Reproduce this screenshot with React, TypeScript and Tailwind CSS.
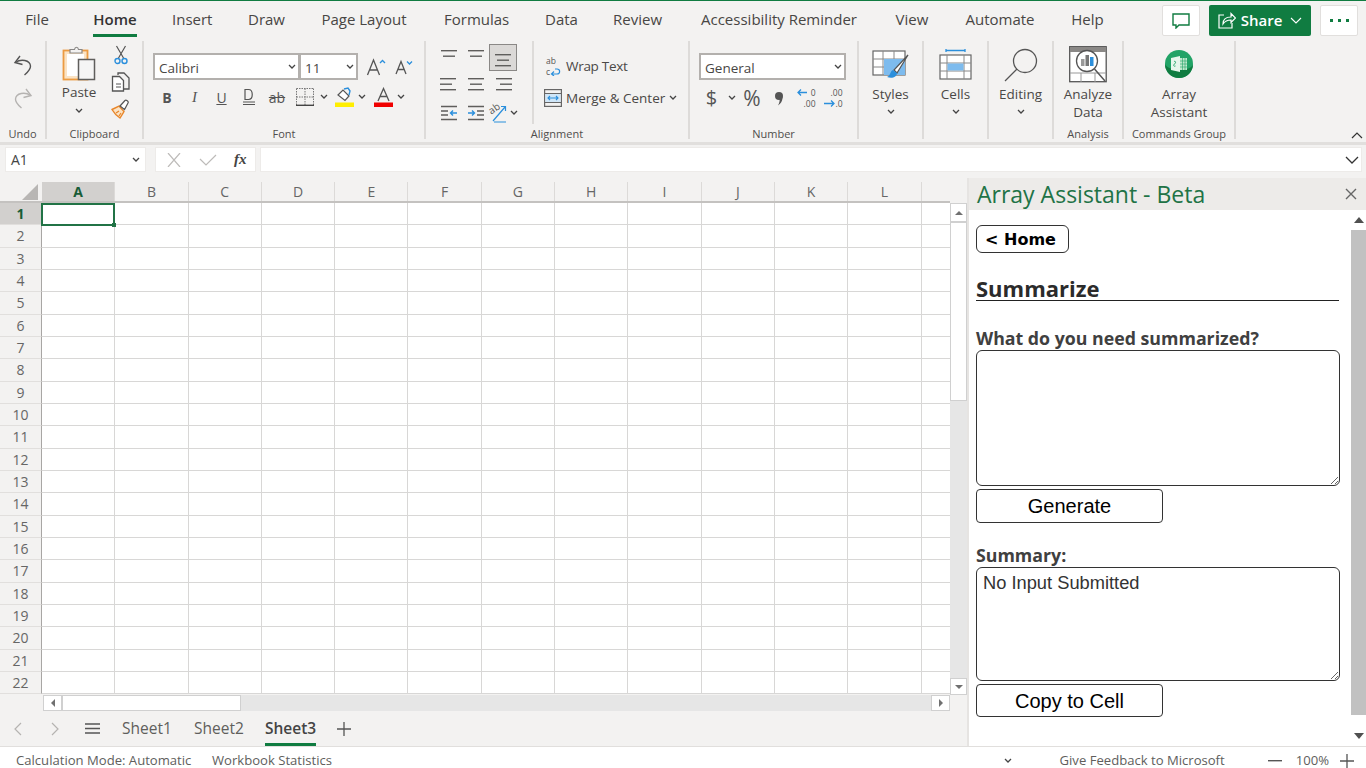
import React from "react";

const ui = "font-['Open_Sans',sans-serif]";
const GREY = "#5f5e5c";
const BLUE = "#2b8fdc";

const tabs = [
  { name: "File", cls: "w-[24px] mr-[44px]" },
  { name: "Home", cls: "w-[44px] mr-[35px]" },
  { name: "Insert", cls: "w-[40px] mr-[36px]" },
  { name: "Draw", cls: "w-[36px] mr-[37px]" },
  { name: "Page Layout", cls: "w-[86px] mr-[37px]" },
  { name: "Formulas", cls: "w-[64px] mr-[37px]" },
  { name: "Data", cls: "w-[32px] mr-[36px]" },
  { name: "Review", cls: "w-[49px] mr-[38px]" },
  { name: "Accessibility Reminder", cls: "w-[158px] mr-[37px]" },
  { name: "View", cls: "w-[34px] mr-[36px]" },
  { name: "Automate", cls: "w-[70px] mr-[36px]" },
  { name: "Help", cls: "w-[33px]" },
];

const columns = ["A", "B", "C", "D", "E", "F", "G", "H", "I", "J", "K", "L"];
const rows = Array.from({ length: 22 }, (_, i) => i + 1);

function Chevron({ size = 8, color = "#444" }: { size?: number; color?: string }) {
  return (
    <svg className="shrink-0" width={size} height={size * 0.7} viewBox="0 0 8 5.6" fill="none">
      <path d="M1 1l3 3 3-3" stroke={color} strokeWidth="1.3" />
    </svg>
  );
}

function Combo({ label, width, border = "" }: { label: string; width: string; border?: string }) {
  return (
    <div className={`${width} ${border} h-[27px] bg-white border-2 border-[#b3b0ad] flex items-center justify-between pl-[4px] pr-[2px] text-[13.5px] text-[#484644]`}>
      <span className="mt-[3px]">{label}</span>
      <Chevron />
    </div>
  );
}

function Group({ width, label, children }: { width: string; label?: string; children: React.ReactNode }) {
  return (
    <div className={`${width} h-[98px] border-r-2 border-[#dddbd9] flex flex-col shrink-0`}>
      <div className="flex-1 min-h-0">{children}</div>
      {label && <div className="h-[12px] leading-[14px] text-[11px] text-center text-[#504e4c] whitespace-nowrap">{label}</div>}
    </div>
  );
}

function BigCommand({ icon, lines }: { icon: React.ReactNode; lines: string[] }) {
  return (
    <div className="flex flex-col items-center text-[13.5px] leading-[18px] text-[#4a4846]">
      <div className="h-[40px] mt-[3px] mb-[1px] flex items-center justify-center">{icon}</div>
      {lines.map((l) => (
        <div key={l} className="whitespace-nowrap">{l}</div>
      ))}
    </div>
  );
}

function DropCommand({ icon, label }: { icon: React.ReactNode; label: string }) {
  return (
    <div className="flex flex-col items-center text-[13.5px] leading-[18px] text-[#4a4846]">
      <div className="h-[40px] mt-[4px] flex items-center justify-center">{icon}</div>
      <div>{label}</div>
      <div className="mt-[6px]"><Chevron /></div>
    </div>
  );
}

function AlignIcon({ lines }: { lines: [number, number][] }) {
  return (
    <svg width="20" height="16" viewBox="0 0 20 16">
      {lines.map(([x, w], i) => (
        <rect key={i} x={x} y={1 + i * 5.5} width={w} height="1.4" fill={GREY} />
      ))}
    </svg>
  );
}

function IndentIcon({ right }: { right?: boolean }) {
  return (
    <svg width="18" height="16" viewBox="0 0 18 16">
      <path d="M1 1.5h16M1 14.5h16" stroke={GREY} strokeWidth="1.3" />
      {right ? (
        <>
          <path d="M10 6h7M10 10h7" stroke={GREY} strokeWidth="1.3" />
          <path d="M1 8h6M5 5.5L7.5 8 5 10.5" stroke={BLUE} strokeWidth="1.4" fill="none" />
        </>
      ) : (
        <>
          <path d="M1 6h7M1 10h7" stroke={GREY} strokeWidth="1.3" />
          <path d="M17 8h-6M13 5.5L10.5 8 13 10.5" stroke={BLUE} strokeWidth="1.4" fill="none" />
        </>
      )}
    </svg>
  );
}

function Ribbon() {
  return (
    <div className="h-[101px] flex bg-[#f3f2f1] relative">
      <Group width="w-[47px]" label="Undo">
        <div className="flex flex-col items-center gap-[12px] pt-[14px]">
          <svg width="20" height="21" viewBox="0 0 20 21" fill="none" stroke="#555" strokeWidth="1.4">
            <path d="M7 1L2 7.5l7.5 2" />
            <path d="M2.5 7.5C8 3.5 17 5 17.5 11c.2 3.5-2.5 6-6 9" />
          </svg>
          <svg width="20" height="21" viewBox="0 0 20 21" fill="none" stroke="#b5b3b1" strokeWidth="1.4">
            <path d="M13 1l5 6.5-7.5 2" />
            <path d="M17.5 7.5C12 3.5 3 5 2.5 11c-.2 3.5 2.5 6 6 9" />
          </svg>
        </div>
      </Group>
      <Group width="w-[97px]" label="Clipboard">
        <div className="flex pl-[15px]">
          <div className="w-[34px] flex flex-col items-center text-[13.5px] text-[#4a4846] leading-[18px]">
            <svg className="mt-[4px]" width="34" height="36" viewBox="0 0 34 36" fill="none">
              <rect x="1.5" y="5.5" width="24" height="29" fill="#fbe3c4" stroke="#ec9b42" strokeWidth="1.8" />
              <rect x="5" y="9" width="17" height="22" fill="#fff" />
              <path d="M8 7V4.5h4.5C13 1.5 16 1.5 16.5 4.5H20V8H8z" fill="#f3f2f1" stroke="#8a8886" strokeWidth="1.2" />
              <rect x="16.5" y="14.5" width="16" height="20" fill="#f5f5f5" stroke="#5f5e5c" strokeWidth="1.5" />
            </svg>
            <div className="mt-[2px]">Paste</div>
            <div className="mt-[7px]"><Chevron /></div>
          </div>
          <div className="ml-[15px] flex flex-col items-center gap-[7px] pt-[4px]">
            <svg width="14" height="20" viewBox="0 0 14 20" fill="none">
              <path d="M2.5 1l7 12M11.5 1l-7 12" stroke="#555" strokeWidth="1.2" />
              <circle cx="3.5" cy="16" r="2.5" stroke={BLUE} strokeWidth="1.4" />
              <circle cx="10.5" cy="16" r="2.5" stroke={BLUE} strokeWidth="1.4" />
            </svg>
            <svg width="20" height="20" viewBox="0 0 20 20" fill="none" stroke="#555" strokeWidth="1.3">
              <path d="M7 3V1h6l5 5v11h-5" fill="#f3f2f1" />
              <path d="M1.5 4.5h7l4 4V19h-11z" fill="#fff" />
              <path d="M5 12h5M5 15h5" strokeWidth="1" />
            </svg>
            <svg width="20" height="20" viewBox="0 0 20 20" fill="none">
              <path d="M1 10.5L8 7l5 5.5L9 19C6 17 3 14 1 10.5z" fill="#fbe3c4" stroke="#e8862a" strokeWidth="1.4" />
              <path d="M5 14l3-2M8 17l2-3" stroke="#e8862a" strokeWidth="1.2" />
              <path d="M9 7l5-5.5c1-1 4 1 3 2.5l-3.5 6.5z" fill="#fff" stroke="#555" strokeWidth="1.2" />
            </svg>
          </div>
        </div>
      </Group>
      <Group width="w-[282px]" label="Font">
        <div className="pl-[9px] pt-[12px]">
          <div className="flex items-center">
            <Combo label="Calibri" width="w-[147px]" />
            <Combo label="11" width="w-[59px]" border="-ml-[1px]" />
            <div className="w-[31px] ml-[2px] flex justify-center">
              <svg width="20" height="18" viewBox="0 0 20 18" fill="none">
                <path d="M1.5 17L7.5 2l6 15M3.5 12h8" stroke="#555" strokeWidth="1.3" />
                <path d="M14 5l2.5-2.5L19 5" stroke={BLUE} strokeWidth="1.3" />
              </svg>
            </div>
            <div className="w-[26px] flex justify-center">
              <svg width="18" height="16" viewBox="0 0 18 16" fill="none">
                <path d="M1 15L6 2.5 11 15M2.8 10.5h6.4" stroke="#555" strokeWidth="1.3" />
                <path d="M12 2.5L14.5 5 17 2.5" stroke={BLUE} strokeWidth="1.3" />
              </svg>
            </div>
          </div>
          <div className="flex items-center h-[20px] mt-[7px] text-[#555]">
            <div className="w-[28px] text-center text-[14px] font-bold">B</div>
            <div className="w-[27px] text-center text-[15px] italic font-['Liberation_Serif',serif]">I</div>
            <div className="w-[27px] text-center text-[14px] underline">U</div>
            <div className="w-[28px] flex justify-center">
              <svg width="14" height="18" viewBox="0 0 14 18" fill="none" stroke="#555" strokeWidth="1.2">
                <path d="M3 1.5v10h3.5c5 0 5-10 0-10z" />
                <path d="M1 14h12M1 16.5h12" />
              </svg>
            </div>
            <div className="w-[28px] text-center text-[14px] line-through">ab</div>
            <div className="w-[27px] flex justify-center">
              <svg width="18" height="18" viewBox="0 0 18 18" fill="none">
                <path d="M.5.5h17M.5.5v17M17.5.5v17M9 .5v17M.5 9h17" stroke="#777" strokeWidth="1" strokeDasharray="1.5 1" />
                <path d="M0 17.3h18" stroke="#444" strokeWidth="1.4" />
              </svg>
            </div>
            <div className="w-[11px] flex justify-center"><Chevron /></div>
            <div className="w-[28px] ml-[1px] flex justify-center">
              <svg width="19" height="20" viewBox="0 0 19 20" fill="none">
                <path d="M3 8l5-5 6 6-4 4.5z" stroke="#555" strokeWidth="1.2" fill="#fff" />
                <path d="M9 2l4-1 2 3-1 4" stroke={BLUE} strokeWidth="1.4" />
                <rect y="15.5" width="19" height="4.5" fill="#ffee00" />
              </svg>
            </div>
            <div className="w-[8px] flex justify-center"><Chevron /></div>
            <div className="w-[32px] ml-[1px] flex justify-center">
              <svg width="19" height="20" viewBox="0 0 19 20" fill="none">
                <path d="M4 14L9.5 1.5 15 14M6 9.5h7" stroke="#555" strokeWidth="1.3" />
                <rect y="15.5" width="19" height="4.5" fill="#f00000" />
              </svg>
            </div>
            <div className="w-[4px] flex justify-center"><Chevron /></div>
          </div>
        </div>
      </Group>
      <Group width="w-[264px]" label="Alignment">
        <div className="flex h-[83px]">
          <div className="w-[108px] pl-[9px] pt-[2px] border-r-2 border-[#dddbd9] h-[83px] grid grid-cols-[27px_27px_28px] auto-rows-[28px] items-center justify-items-center">
            <AlignIcon lines={[[2, 16], [4, 12]]} />
            <AlignIcon lines={[[2, 16], [4, 12]]} />
            <div className="w-[28px] h-[27px] bg-[#dbd9d7] border border-[#8a8886] flex items-end justify-center pb-[1px]">
              <AlignIcon lines={[[2, 16], [4, 12], [2, 16]]} />
            </div>
            <AlignIcon lines={[[1, 16], [1, 12], [1, 16]]} />
            <AlignIcon lines={[[2, 16], [4, 12], [2, 16]]} />
            <AlignIcon lines={[[3, 16], [7, 12], [3, 16]]} />
            <IndentIcon />
            <IndentIcon right />
            <div className="flex items-center gap-[3px]">
              <div className="relative w-[19px] h-[20px]">
                <span className="absolute left-0 top-[-1px] text-[10px] leading-[12px] text-[#555] -rotate-[35deg]">ab</span>
                <svg className="absolute left-0 top-0" width="19" height="20" viewBox="0 0 19 20" fill="none">
                  <path d="M5 18L17 4M13 3.5h4.5V8M6 19h12" stroke={BLUE} strokeWidth="1.2" />
                </svg>
              </div>
              <Chevron />
            </div>
          </div>
          <div className="pl-[9px] pt-[15px] text-[13.5px] text-[#4a4846] leading-[20px]">
            <div className="flex items-center gap-[3px] pl-[3px] h-[20px]">
              <div className="w-[17px] text-[8.5px] leading-[11.5px] text-[#555]">
                <div>ab</div>
                <div className="flex items-center">
                  <span>c</span>
                  <svg width="11" height="9" viewBox="0 0 11 9" fill="none">
                    <path d="M2 7h5c3.5 0 3.5-5 0-5H5M4 4.5L1.5 7 4 9" stroke={BLUE} strokeWidth="1.2" />
                  </svg>
                </div>
              </div>
              <span className="tracking-[-0.3px]">Wrap Text</span>
            </div>
            <div className="flex items-center gap-[4px] mt-[12px] ml-[1px]">
              <svg width="18" height="18" viewBox="0 0 18 18" fill="none">
                <rect x=".6" y=".6" width="16.8" height="16.8" stroke="#666" strokeWidth="1.2" />
                <path d="M1 4.5h16M1 13.5h16" stroke="#666" strokeWidth="1" />
                <rect x="1.5" y="5" width="15" height="8" fill="#cfe6f8" />
                <path d="M4 9h10M6 7L4 9l2 2M12 7l2 2-2 2" stroke={BLUE} strokeWidth="1.1" />
              </svg>
              <span className="whitespace-nowrap">Merge & Center</span>
              <Chevron />
            </div>
          </div>
        </div>
      </Group>
      <Group width="w-[169px]" label="Number">
        <div className="pl-[9px] pt-[12px]">
          <Combo label="General" width="w-[147px]" />
          <div className="flex items-center h-[22px] mt-[7px] text-[#555]">
            <div className="w-[25px] text-center text-[20px] leading-[22px]">$</div>
            <div className="w-[16px] flex justify-center"><Chevron /></div>
            <div className="w-[24px] text-center text-[21px] leading-[22px]">%</div>
            <div className="w-[30px] flex justify-center">
              <svg width="10" height="15" viewBox="0 0 10 15">
                <circle cx="5" cy="5" r="4" fill="#555" />
                <path d="M6 3c3.5 2 3.5 8-2 11.5 1.5-3 2-5 1.5-8z" fill="#555" />
              </svg>
            </div>
            <div className="w-[24px] flex justify-center">
              <div className="w-[19px] text-[8.5px] leading-[11.5px] text-[#555]">
                <div className="flex items-center justify-between">
                  <svg width="10" height="9" viewBox="0 0 10 9" fill="none">
                    <path d="M10 4.5H1M4 1.5l-3 3 3 3" stroke={BLUE} strokeWidth="1.3" />
                  </svg>
                  <span>0</span>
                </div>
                <div className="text-right">.00</div>
              </div>
            </div>
            <div className="w-[30px] flex justify-center">
              <div className="w-[19px] text-[8.5px] leading-[11.5px] text-[#555]">
                <div className="text-right">.00</div>
                <div className="flex items-center justify-between">
                  <svg width="11" height="9" viewBox="0 0 11 9" fill="none">
                    <path d="M0 4.5h10M7 1.5l3 3-3 3" stroke={BLUE} strokeWidth="1.3" />
                  </svg>
                  <span>.0</span>
                </div>
              </div>
            </div>
          </div>
        </div>
      </Group>
      <Group width="w-[65px]">
        <DropCommand
          label="Styles"
          icon={
            <svg width="37" height="32" viewBox="0 0 37 32" fill="none">
              <rect x="1" y="2" width="32" height="24" fill="#fff" stroke="#666" strokeWidth="1.2" />
              <path d="M1 10h32M1 18h32M11 2v24M22 2v24" stroke="#888" strokeWidth="1" />
              <rect x="12" y="10" width="21" height="16" fill="#7dbbee" />
              <path d="M36 6L22 21l3 3z" fill="#fff" stroke="#555" strokeWidth="1.2" />
              <path d="M21 21c-3 1-2 5-6 7 5 2 10 0 10-4z" fill={BLUE} />
            </svg>
          }
        />
      </Group>
      <Group width="w-[65px]">
        <DropCommand
          label="Cells"
          icon={
            <svg width="33" height="32" viewBox="0 0 33 32" fill="none">
              <path d="M7 1.5h19M7 0v3M26 0v3" stroke={BLUE} strokeWidth="1.3" />
              <rect x="1" y="6" width="31" height="24" fill="#fff" stroke="#666" strokeWidth="1.2" />
              <path d="M1 14h31M1 22h31M8 6v24M25 6v24" stroke="#888" strokeWidth="1" />
              <rect x="8.5" y="14.5" width="16" height="7" fill="#7dbbee" />
            </svg>
          }
        />
      </Group>
      <Group width="w-[65px]">
        <DropCommand
          label="Editing"
          icon={
            <svg width="34" height="34" viewBox="0 0 34 34" fill="none" stroke="#555" strokeWidth="1.3">
              <circle cx="21" cy="13" r="11.5" />
              <path d="M13 21L1 33" />
            </svg>
          }
        />
      </Group>
      <Group width="w-[70px]" label="Analysis">
        <BigCommand
          lines={["Analyze", "Data"]}
          icon={
            <svg width="38" height="37" viewBox="0 0 38 37" fill="none">
              <rect x=".7" y=".7" width="36.5" height="35" fill="#fff" stroke="#555" strokeWidth="1.3" />
              <rect x="1" y="1" width="36" height="5" fill="#8a8886" />
              <path d="M1 27h36M12 27v9M26 27v9" stroke="#999" strokeWidth="1" />
              <circle cx="18" cy="15" r="10.5" fill="#fff" stroke="#555" strokeWidth="1.3" />
              <rect x="12" y="13" width="3.5" height="7" fill="#999" />
              <rect x="16.5" y="9" width="3.5" height="11" fill="#777" />
              <rect x="21" y="11" width="3.5" height="9" fill={BLUE} />
              <path d="M25.5 23L36 35" stroke="#555" strokeWidth="1.5" />
            </svg>
          }
        />
      </Group>
      <Group width="w-[112px]" label="Commands Group">
        <BigCommand
          lines={["Array", "Assistant"]}
          icon={
            <svg width="28" height="28" viewBox="0 0 28 28">
              <circle cx="14" cy="14" r="14" fill="#21a366" />
              <path d="M0 14a14 14 0 0 0 28 0c-2 8-24 8-28 0z" fill="#107c41" />
              <path d="M6 8l9-2v16l-9-2z" fill="#e6f6ec" />
              <rect x="15" y="8" width="7" height="12" fill="#bfe8cd" />
              <path d="M17.5 8v12M20 8v12M15 11h7M15 14h7M15 17h7" stroke="#21a366" strokeWidth=".6" />
              <path d="M9 11.5c2-1 2 2 .5 2.5s-1 3 1 2" stroke="#21a366" strokeWidth=".9" fill="none" />
            </svg>
          }
        />
      </Group>
      <div className="flex-1 flex items-end justify-end pr-[3px] pb-[3px]">
        <svg width="12" height="7" viewBox="0 0 12 7" fill="none">
          <path d="M1 6l5-5 5 5" stroke="#333" strokeWidth="1.2" />
        </svg>
      </div>
    </div>
  );
}

function FormulaBar() {
  return (
    <div className="h-[25px] mt-[2px] flex gap-[9px] pl-[5px] pr-[4px] shrink-0">
      <div className="w-[141px] bg-white border border-[#edebe9] flex items-center justify-between pl-[5px] pr-[5px] text-[14px] text-[#444]">
        <span>A1</span>
        <Chevron />
      </div>
      <div className="w-[101px] bg-white border border-[#edebe9] flex items-center pl-[10px] gap-[17px]">
        <svg width="16" height="14" viewBox="0 0 16 14" fill="none">
          <path d="M2 0l12 14M14 0L2 14" stroke="#bdbbb9" strokeWidth="1.2" />
        </svg>
        <svg width="18" height="12" viewBox="0 0 18 12" fill="none">
          <path d="M1 5l6 6L17 1" stroke="#bdbbb9" strokeWidth="1.2" />
        </svg>
        <span className="font-['Liberation_Serif',serif] italic font-bold text-[15px] text-[#444]">fx</span>
      </div>
      <div className="flex-1 -ml-[5px] bg-white border border-[#edebe9] flex items-center justify-end pr-[2px]">
        <svg width="14" height="8" viewBox="0 0 14 8" fill="none">
          <path d="M1 1l6 6 6-6" stroke="#333" strokeWidth="1.3" />
        </svg>
      </div>
    </div>
  );
}

function ArrowBox({ dir, cls }: { dir: "up" | "down" | "left" | "right"; cls: string }) {
  const pts = { up: "1,7 5,3 9,7", down: "1,3 5,7 9,3", left: "7,1 3,5 7,9", right: "3,1 7,5 3,9" }[dir];
  return (
    <div className={`${cls} bg-white border border-[#d0d0d0] flex items-center justify-center shrink-0`}>
      <svg width="10" height="10" viewBox="0 0 10 10">
        <polygon points={pts} fill="#707070" />
      </svg>
    </div>
  );
}

function Sheet() {
  return (
    <div className="w-[967px] shrink-0 flex flex-col bg-[#f3f2f1]">
      <div className="h-[10px]" />
      <div className="w-[950px] h-[21px] flex border-b-2 border-[#c4c2c0] overflow-hidden">
        <div className="w-[42px] flex justify-end items-end pr-[4px] pb-[1px] shrink-0">
          <svg width="16" height="16" viewBox="0 0 16 16"><polygon points="16,0 16,16 0,16" fill="#b8b6b4" /></svg>
        </div>
        {columns.map((c, i) => (
          <div
            key={c}
            className={`w-[73.3px] shrink-0 text-center text-[14px] leading-[19px] border-r border-[#dcdad8] ${i === 0 ? "bg-[#d2d0ce] text-[#185c37] font-bold" : "text-[#666]"}`}
          >
            {c}
          </div>
        ))}
      </div>
      <div className="flex h-[492px]">
        <div className="w-[950px] overflow-hidden relative">
          {rows.map((r) => (
            <div key={r} className="h-[22.33px] flex">
              <div className={`w-[42px] shrink-0 border-r border-[#a8a6a4] border-b border-b-[#e1dfdd] text-center text-[14px] leading-[22px] ${r === 1 ? "bg-[#d2d0ce] text-[#185c37] font-bold" : "text-[#666]"}`}>
                {r}
              </div>
              {columns.concat("M").map((c) => (
                <div key={c} className="w-[73.3px] shrink-0 bg-white border-r border-b border-[#d8d7d6]" />
              ))}
            </div>
          ))}
          <div className="absolute left-[41px] top-0 w-[74px] h-[23px] border-2 border-[#217346]">
            <div className="absolute -right-[3px] -bottom-[3px] w-[4px] h-[4px] bg-[#217346]" />
          </div>
        </div>
        <div className="w-[17px] flex flex-col bg-[#e6e6e6]">
          <ArrowBox dir="up" cls="h-[19px] w-[17px]" />
          <div className="h-[179px] bg-white border border-[#d0d0d0]" />
          <div className="flex-1" />
          <ArrowBox dir="down" cls="h-[17px] w-[17px]" />
        </div>
      </div>
      <div className="w-[950px] h-[16px] flex pl-[43px] bg-[#f3f2f1]">
        <ArrowBox dir="left" cls="w-[19px] h-[16px]" />
        <div className="w-[179px] bg-white border border-[#d0d0d0]" />
        <div className="flex-1 bg-[#e6e6e6]" />
        <ArrowBox dir="right" cls="w-[19px] h-[16px]" />
      </div>
      <div className="h-[35px] flex items-center text-[15.5px] text-[#605e5c]">
        <div className="w-[14px]" />
        <svg width="8" height="14" viewBox="0 0 8 14" fill="none"><path d="M7 1L1 7l6 6" stroke="#b5b3b1" strokeWidth="1.2" /></svg>
        <div className="w-[29px]" />
        <svg width="8" height="14" viewBox="0 0 8 14" fill="none"><path d="M1 1l6 6-6 6" stroke="#b5b3b1" strokeWidth="1.2" /></svg>
        <div className="w-[26px]" />
        <svg width="15" height="11" viewBox="0 0 15 11" fill="none"><path d="M0 1h15M0 5.5h15M0 10h15" stroke="#555" strokeWidth="1.4" /></svg>
        <div className="w-[22px]" />
        <div className="w-[72px]">Sheet1</div>
        <div className="w-[71px]">Sheet2</div>
        <div className="w-[51px] h-[35px] leading-[34px] font-semibold text-[#444] border-b-[3px] border-[#107c41] box-border">Sheet3</div>
        <div className="w-[21px]" />
        <svg width="14" height="14" viewBox="0 0 14 14" fill="none"><path d="M7 0v14M0 7h14" stroke="#555" strokeWidth="1.3" /></svg>
      </div>
    </div>
  );
}

function Panel() {
  return (
    <div className="w-[399px] mt-[6px] border-l-2 border-[#e6e4e2] bg-white flex flex-col min-h-0">
      <div className="h-[32px] bg-[#edebe9] flex items-center justify-between pl-[8px] pr-[9px] shrink-0">
        <span className="text-[23px] leading-[32px] text-[#217346]">Array Assistant - Beta</span>
        <svg width="12" height="12" viewBox="0 0 12 12" fill="none"><path d="M1 1l10 10M11 1L1 11" stroke="#666" strokeWidth="1.4" /></svg>
      </div>
      <div className="flex flex-1 min-h-0">
        <div className="w-[382px] pl-[7px] pt-[15px]">
          <button className="block w-[93px] h-[28px] pr-[4px] pt-[1px] rounded-[6px] border border-[#333] bg-white text-[16px] leading-[24px] font-bold text-black text-center font-['DejaVu_Sans',sans-serif]">
            &lt; Home
          </button>
          <h2 className="w-[363px] mt-[23px] h-[25px] border-b border-[#222] text-[22px] leading-[24px] font-bold text-[#2b2b2b]">
            Summarize
          </h2>
          <label className="block mt-[25px] text-[17.75px] leading-[24px] font-bold text-[#404040]">What do you need summarized?</label>
          <textarea className="block w-[364px] h-[136px] rounded-[6px] border border-[#333] bg-white outline-none" />
          <button className="block w-[187px] h-[34px] mt-[3px] rounded-[4px] border border-[#333] bg-white text-[20px] text-black font-['Liberation_Sans',sans-serif]">
            Generate
          </button>
          <label className="block mt-[20px] text-[17.75px] leading-[24px] font-bold text-[#404040]">Summary:</label>
          <textarea
            readOnly
            value="No Input Submitted"
            className="block w-[364px] h-[114px] rounded-[6px] border border-[#333] bg-white outline-none px-[6px] py-[3px] text-[18.3px] leading-[24px] text-[#333] font-['Liberation_Sans',sans-serif]"
          />
          <button className="block w-[187px] h-[33px] mt-[3px] rounded-[4px] border border-[#333] bg-white text-[20px] text-black font-['Liberation_Sans',sans-serif]">
            Copy to Cell
          </button>
        </div>
        <div className="w-[15px] flex flex-col items-center">
          <div className="h-[20px] flex items-center"><svg width="10" height="6" viewBox="0 0 10 6"><polygon points="5,0 10,6 0,6" fill="#505050" /></svg></div>
          <div className="h-[485px] w-full bg-[#c1c1c1] shrink-0" />
          <div className="pt-[18px]"><svg className="block" width="10" height="6" viewBox="0 0 10 6"><polygon points="0,0 10,0 5,6" fill="#505050" /></svg></div>
        </div>
      </div>
    </div>
  );
}

export default function App() {
  return (
    <div className={`${ui} w-[1366px] h-[768px] overflow-hidden flex flex-col bg-[#f3f2f1]`}>
      <div className="h-px bg-[#107c41] shrink-0" />
      <div className="h-[40px] flex pl-[25px] shrink-0">
        {tabs.map((t) => (
          <div key={t.name} className={`${t.cls} h-[36px] leading-[37px] text-[15px] text-center whitespace-nowrap shrink-0 ${t.name === "Home" ? "font-semibold text-[#333] border-b-[3px] border-[#107c41]" : "text-[#484644]"}`}>
            {t.name}
          </div>
        ))}
        <div className="flex-1 flex justify-end gap-[9px] pr-[8px] pt-[4px]">
          <div className="w-[38px] h-[31px] bg-white border border-[#e1dfdd] rounded-[2px] flex items-center justify-center">
            <svg width="18" height="16" viewBox="0 0 18 16" fill="none"><path d="M1 1h16v11H7l-3 3v-3H1z" stroke="#107c41" strokeWidth="1.4" /></svg>
          </div>
          <div className="w-[102px] h-[31px] bg-[#107c41] rounded-[2px] flex items-center justify-center gap-[5px] text-white text-[15px] font-semibold">
            <svg width="18" height="17" viewBox="0 0 18 17" fill="none" stroke="#fff" strokeWidth="1.2">
              <path d="M6 3H1v13h13v-5" />
              <path d="M5 12c0-5 3-7 8-7V1.5L17.5 6 13 10.5V8c-3 0-6 1-8 4z" />
            </svg>
            <span>Share</span>
            <svg className="ml-[3px]" width="12" height="7" viewBox="0 0 12 7" fill="none"><path d="M1 1l5 5 5-5" stroke="#fff" strokeWidth="1.1" /></svg>
          </div>
          <div className="w-[38px] h-[31px] bg-white border border-[#e1dfdd] rounded-[2px] flex items-center justify-center gap-[5px]">
            <span className="w-[3px] h-[3px] bg-[#107c41]" />
            <span className="w-[3px] h-[3px] bg-[#107c41]" />
            <span className="w-[3px] h-[3px] bg-[#107c41]" />
          </div>
        </div>
      </div>
      <Ribbon />
      <div className="h-[3px] bg-[#e1dfdd] shrink-0" />
      <FormulaBar />
      <div className="flex h-[574px] shrink-0">
        <Sheet />
        <Panel />
      </div>
      <div className="h-[22px] bg-white border-t border-[#e1dfdd] flex items-center pt-[7px] text-[13.1px] text-[#605e5c] shrink-0">
        <span className="ml-[16px] w-[196px]">Calculation Mode: Automatic</span>
        <span>Workbook Statistics</span>
        <div className="ml-auto flex items-center">
          <Chevron />
          <span className="ml-[48px]">Give Feedback to Microsoft</span>
          <svg className="ml-[43px]" width="14" height="2" viewBox="0 0 14 2"><rect width="14" height="1.4" fill="#555" /></svg>
          <span className="ml-[14px]">100%</span>
          <svg className="ml-[11px] mr-[12px]" width="14" height="14" viewBox="0 0 14 14" fill="none"><path d="M7 0v14M0 7h14" stroke="#555" strokeWidth="1.3" /></svg>
        </div>
      </div>
    </div>
  );
}
